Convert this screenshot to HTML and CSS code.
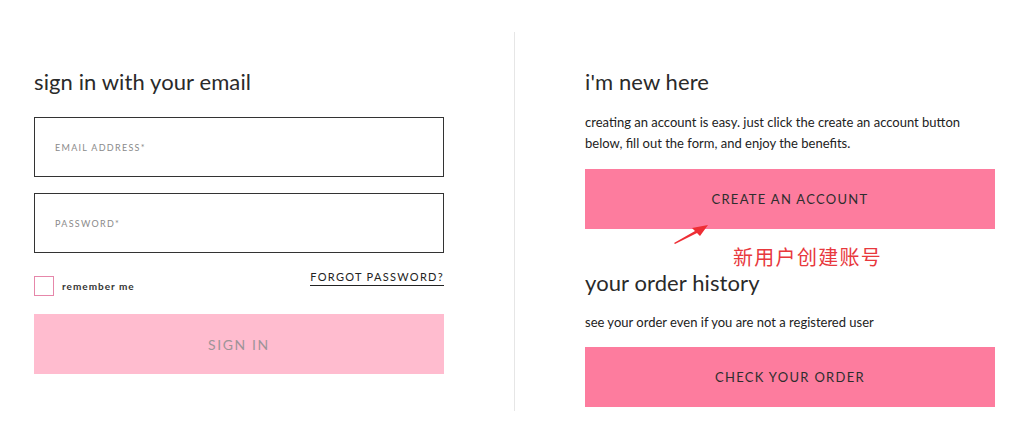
FILE: index.html
```html
<!DOCTYPE html>
<html lang="en">
<head>
<meta charset="utf-8">
<title>Sign in</title>
<link rel="stylesheet" href="styles.css">
</head>
<body>
<main class="page">
  <section class="col col-left">
    <h2 class="title">sign in with your email</h2>
    <form class="form">
      <label class="field"><span class="ph">EMAIL ADDRESS*</span></label>
      <label class="field field-2"><span class="ph">PASSWORD*</span></label>
      <div class="row">
        <label class="remember"><span class="box"></span><span>remember me</span></label>
        <a class="forgot" href="#">FORGOT PASSWORD?</a>
      </div>
      <button type="button" class="btn btn-light">SIGN IN</button>
    </form>
  </section>
  <div class="divider"></div>
  <section class="col col-right">
    <h2 class="title">i'm new here</h2>
    <p class="text">creating an account is easy. just click the create an account button below, fill out the form, and enjoy the benefits.</p>
    <button type="button" class="btn btn-pink btn-create">CREATE AN ACCOUNT</button>
    <svg class="arrow" width="40" height="26" viewBox="0 0 40 26" aria-hidden="true">
      <polygon points="3,20 24,8 21,5 37,2 29,13 26,10 4,21" fill="#ee2e35"/>
    </svg>
    <span class="note">新用户创建账号</span>
    <h2 class="title title-2">your order history</h2>
    <p class="text text-2">see your order even if you are not a registered user</p>
    <button type="button" class="btn btn-pink btn-order">CHECK YOUR ORDER</button>
  </section>
</main>
</body>
</html>
```

FILE: styles.css
```css
html, body {
  margin: 0;
  padding: 0;
  background: #ffffff;
}

body {
  font-family: Lato, "Open Sans", "Noto Sans", sans-serif;
  color: #2b2b2b;
}

.page {
  display: flex;
  align-items: stretch;
  padding: 32px 0 11px 34px;
}

.col {
  width: 410px;
  flex: none;
}

.col-right {
  position: relative;
  padding-bottom: 4px;
}

.divider {
  width: 1px;
  background: #e6e6e6;
  margin: 0 70px;
  flex: none;
}

.title {
  margin: 37px 0 0;
  font-size: 22px;
  line-height: 26px;
  font-weight: 400;
  color: #2a2a2a;
  letter-spacing: 0.1px;
}

.form {
  display: flex;
  flex-direction: column;
  margin-top: 22px;
}

.field {
  display: flex;
  align-items: center;
  height: 58px;
  border: 1px solid #333333;
  padding-left: 20px;
}

.field-2 {
  margin-top: 16px;
}

.ph {
  font-size: 9px;
  letter-spacing: 1.3px;
  color: #8a8a8a;
}

.row {
  display: flex;
  justify-content: space-between;
  align-items: flex-start;
  margin-top: 17px;
  height: 44px;
}

.remember {
  display: flex;
  align-items: center;
  gap: 8px;
  margin-top: 6px;
  font-size: 10px;
  letter-spacing: 1px;
  font-weight: 700;
  color: #333;
}

.box {
  width: 18px;
  height: 18px;
  border: 1px solid #e687aa;
}

.forgot {
  font-size: 11px;
  letter-spacing: 1.3px;
  color: #222;
  text-decoration: none;
  border-bottom: 1px solid #222;
  line-height: 13px;
  padding-bottom: 2px;
  margin-top: 0;
}

.btn {
  display: flex;
  align-items: center;
  justify-content: center;
  width: 410px;
  height: 60px;
  border: 0;
  padding: 0;
  font-family: inherit;
  cursor: pointer;
}

.btn-light {
  background: #ffbccf;
  color: #9d9498;
  font-size: 14px;
  letter-spacing: 1.6px;
}

.btn-pink {
  background: #fd7c9e;
  color: #2e2e2e;
  font-size: 13px;
  letter-spacing: 1.3px;
}

.text {
  margin: 17px 0 0;
  font-size: 13px;
  line-height: 21px;
  color: #222;
}

.btn-create {
  margin-top: 15px;
}

.title-2 {
  margin-top: 41px;
}

.text-2 {
  margin-top: 16px;
}

.btn-order {
  margin-top: 14px;
}

.arrow {
  position: absolute;
  left: 86px;
  top: 191px;
}

.note {
  position: absolute;
  left: 148px;
  top: 212px;
  font-family: "Noto Sans CJK SC", sans-serif;
  font-size: 20px;
  line-height: 26px;
  letter-spacing: 1.3px;
  color: #e8383d;
}
```
